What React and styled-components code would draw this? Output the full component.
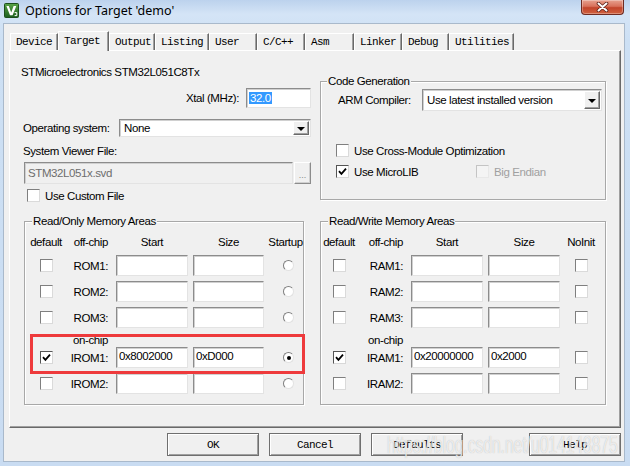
import React from 'react';
import styled, { createGlobalStyle } from 'styled-components';

const UI = `'Liberation Sans', Arial, sans-serif`;
const MONO = `'Liberation Mono', 'DejaVu Sans Mono', monospace`;

const Global = createGlobalStyle`
  html, body { margin: 0; padding: 0; width: 630px; height: 466px; overflow: hidden; background: #c9dcf2; }
  *, *::before, *::after { box-sizing: border-box; }
`;

const Window = styled.div`
  position: relative;
  width: 630px;
  height: 466px;
  display: flex;
  flex-direction: column;
  background: linear-gradient(180deg, #bcd2ed 0px, #d4e4f6 14px, #cde0f4 40px, #c9dcf2 100%);
  font-family: ${UI};
  font-size: 11.5px;
  letter-spacing: -0.4px;
  color: #000;
  overflow: hidden;
`;

const TitleBar = styled.div`
  flex: none;
  height: 23px;
  display: flex;
  align-items: flex-start;
`;

const AppIcon = styled.svg`
  flex: none;
  width: 15px;
  height: 15px;
  margin: 3px 0 0 4px;
`;

const TitleText = styled.div`
  margin: 3px 0 0 6px;
  font-family: 'Noto Sans', 'Open Sans', sans-serif;
  font-size: 12.5px;
  letter-spacing: 0;
  line-height: 16px;
  white-space: nowrap;
`;

const CloseButton = styled.div`
  margin-left: auto;
  margin-right: 6px;
  width: 43px;
  height: 15px;
  border: 1px solid #6e2b22;
  border-top: none;
  border-radius: 0 0 4px 4px;
  background: linear-gradient(180deg, #e7a18f 0%, #d8715b 45%, #c2442b 55%, #d0613f 100%);
  box-shadow: inset 0 0 0 1px rgba(255, 255, 255, 0.3);
  display: flex;
  align-items: center;
  justify-content: center;
`;

const Client = styled.div`
  flex: 1;
  min-height: 0;
  margin: 0 5px 4px 3px;
  background: #f0f0f0;
  border: 1px solid #a9b9cb;
  display: flex;
  flex-direction: column;
`;

const TabStrip = styled.div`
  flex: none;
  height: 26px;
  padding-left: 6px;
  display: flex;
  align-items: flex-end;
`;

const Tab = styled.div`
  flex: none;
  position: relative;
  z-index: ${(p) => (p.$active ? 2 : 0)};
  width: ${(p) => p.$w}px;
  height: ${(p) => (p.$active ? 20 : 17)}px;
  margin-bottom: ${(p) => (p.$active ? -1 : 0)}px;
  padding: 0 0 ${(p) => (p.$active ? 2 : 0)}px 5px;
  display: flex;
  align-items: center;
  background: #f0f0f0;
  border-top: 1px solid #fff;
  border-left: 1px solid #fff;
  border-right: 1px solid #696969;
  box-shadow: inset -1px 0 0 #a0a0a0;
  font-family: ${MONO};
  font-size: 11px;
  letter-spacing: -0.6px;
  white-space: nowrap;
`;

const Panel = styled.div`
  position: relative;
  flex: none;
  margin-left: 5px;
  width: 612px;
  height: 378px;
  border: 1px solid;
  border-color: #fff #696969 #696969 #fff;
  box-shadow: inset -1px -1px 0 #a0a0a0;
  display: flex;
  flex-direction: column;
`;

const TopRow = styled.div`
  display: flex;
  align-items: flex-start;
  padding: 13px 0 0 11px;
`;

const DeviceSection = styled.div`
  width: 290px;
  display: flex;
  flex-direction: column;
`;

const DeviceName = styled.div`
  line-height: 16px;
  height: 16px;
  white-space: nowrap;
`;

const Label = styled.span`
  flex: none;
  white-space: nowrap;
`;

const XtalRow = styled.div`
  margin-top: 8px;
  height: 20px;
  display: flex;
  align-items: center;
  justify-content: flex-end;
  gap: 7px;
`;

const Field = styled.div`
  flex: none;
  width: ${(p) => (p.$w ? `${p.$w}px` : 'auto')};
  height: ${(p) => p.$h || 21}px;
  background: ${(p) => (p.$disabled ? '#f0f0f0' : '#fff')};
  color: ${(p) => (p.$disabled ? '#6d6d6d' : '#000')};
  border: 1px solid;
  border-color: #8c8c8c #e3e3e3 #e3e3e3 #8c8c8c;
  box-shadow: inset 1px 1px 0 #d0d0d0;
  padding: ${(p) => (p.$top ? '2px 2px 0' : '0 3px')};
  display: flex;
  align-items: ${(p) => (p.$top ? 'flex-start' : 'center')};
  line-height: 13px;
  white-space: nowrap;
  overflow: hidden;
`;

const Highlight = styled.span`
  background: #3399ff;
  color: #fff;
  line-height: 12px;
  padding: 0 1px;
  margin-left: -1px;
`;

const OsRow = styled.div`
  margin-top: 11px;
  height: 18px;
  padding-left: 2px;
  display: flex;
  align-items: center;
`;

const SelectBox = styled.div`
  flex: none;
  margin-left: auto;
  margin-right: ${(p) => p.$mr || 0}px;
  width: ${(p) => p.$w}px;
  height: ${(p) => p.$h}px;
  display: flex;
  background: #fff;
  border: 1px solid;
  border-color: #8c8c8c #e3e3e3 #e3e3e3 #8c8c8c;
  box-shadow: inset 1px 1px 0 #d0d0d0;
`;

const SelectValue = styled.span`
  flex: 1;
  padding-left: 4px;
  display: flex;
  align-items: center;
  white-space: nowrap;
`;

const DropButton = styled.span`
  flex: none;
  width: 16px;
  margin: 1px;
  background: #f0f0f0;
  border: 1px solid;
  border-color: #fff #696969 #696969 #fff;
  box-shadow: inset -1px -1px 0 #a0a0a0;
  display: flex;
  align-items: center;
  justify-content: center;
  &::after {
    content: '';
    border-left: 4px solid transparent;
    border-right: 4px solid transparent;
    border-top: 4px solid #000;
    margin-top: 1px;
  }
`;

const SvfLabel = styled.div`
  margin-top: 7px;
  padding-left: 2px;
  line-height: 14px;
`;

const SvfRow = styled.div`
  margin-top: 4px;
  padding-left: 3px;
  display: flex;
  gap: 1px;
`;

const BrowseButton = styled.span`
  flex: none;
  width: 17px;
  height: 22px;
  background: #f0f0f0;
  border: 1px solid;
  border-color: #fff #8c8c8c #8c8c8c #fff;
  box-shadow: inset -1px -1px 0 #d0d0d0;
  color: #8a8a8a;
  font-size: 9px;
  letter-spacing: 0;
  display: flex;
  align-items: flex-end;
  justify-content: center;
  padding-bottom: 3px;
  line-height: 9px;
`;

const CheckRow = styled.div`
  margin-top: ${(p) => p.$mt || 0}px;
  padding-left: ${(p) => p.$pl || 0}px;
  height: 13px;
  display: flex;
  align-items: center;
`;

const CheckItem = styled.span`
  flex: none;
  width: ${(p) => (p.$w ? `${p.$w}px` : 'auto')};
  display: flex;
  align-items: center;
  gap: 5px;
  color: ${(p) => (p.$disabled ? '#a0a0a0' : '#000')};
  white-space: nowrap;
  line-height: 14px;
`;

const Box = styled.span`
  flex: none;
  width: 13px;
  height: 13px;
  display: inline-flex;
  align-items: center;
  justify-content: center;
  background: ${(p) => (p.$disabled ? '#f4f4f4' : '#fff')};
  border: 1px solid;
  border-color: ${(p) =>
    p.$disabled ? '#c4c4c4 #e8e8e8 #e8e8e8 #c4c4c4' : p.$on ? '#555 #d8d8d8 #d8d8d8 #555' : '#7f7f7f #dadada #dadada #7f7f7f'};
`;

const Radio = styled.span`
  width: 11px;
  height: 11px;
  border-radius: 50%;
  border: 1px solid;
  border-color: #7f7f7f #e2e2e2 #e2e2e2 #7f7f7f;
  background: #fff;
  display: flex;
  align-items: center;
  justify-content: center;
  justify-self: end;
  margin-right: 8px;
  &::after {
    content: '';
    width: 4px;
    height: 4px;
    border-radius: 50%;
    background: #000;
    display: ${(p) => (p.$on ? 'block' : 'none')};
  }
`;

const GroupBox = styled.div`
  position: relative;
  flex: none;
  width: ${(p) => p.$w}px;
  height: ${(p) => (p.$h ? `${p.$h}px` : 'auto')};
  margin-top: ${(p) => p.$mt || 0}px;
  margin-left: ${(p) => p.$ml || 0}px;
  border: 1px solid #a8a8a8;
  box-shadow: inset 1px 1px 0 #fff, 1px 1px 0 #fff;
  display: flex;
  flex-direction: column;
  padding-bottom: ${(p) => p.$pb || 0}px;
`;

const Legend = styled.span`
  align-self: flex-start;
  margin: -8px 0 0 ${(p) => p.$ml || 7}px;
  padding: 0 1px;
  background: #f0f0f0;
  line-height: 14px;
  white-space: nowrap;
`;

const CompilerRow = styled.div`
  margin-top: 1px;
  height: 22px;
  padding-left: 17px;
  display: flex;
  align-items: center;
`;

const MemoryRow = styled.div`
  display: flex;
  align-items: flex-start;
  margin-top: 19px;
  padding-left: 14px;
  gap: 16px;
`;

const MemGrid = styled.div`
  margin-top: 5px;
  display: grid;
  grid-template-columns: ${(p) => p.$cols};
  grid-template-rows: 17px 21px 21px 21px 9px 21px 21px;
  column-gap: 5px;
  row-gap: 5px;
  align-items: center;
`;

const HeadCell = styled.span`
  justify-self: ${(p) => p.$align || 'center'};
  padding-right: ${(p) => (p.$align === 'end' ? 3 : 0)}px;
  white-space: nowrap;
  line-height: 14px;
`;

const RowLabel = styled.span`
  justify-self: end;
  padding-right: 3px;
  white-space: nowrap;
  line-height: 14px;
`;

const OnChip = styled.span`
  grid-column: 1 / -1;
  align-self: start;
  text-align: right;
  padding-right: 194px;
  line-height: 14px;
  white-space: nowrap;
`;

const Cell = styled.span`
  justify-self: center;
  display: flex;
`;

const Callout = styled.div`
  position: absolute;
  left: 5px;
  top: 112px;
  width: 275px;
  height: 40px;
  border: 3px solid #ee3a3c;
  pointer-events: none;
`;

const ButtonRow = styled.div`
  flex: none;
  margin-top: 5px;
  padding: 0 3px 0 163px;
  display: flex;
  gap: 10px;
`;

const DlgButton = styled.div`
  flex: none;
  width: 92px;
  height: 23px;
  margin-left: ${(p) => (p.$push ? 'auto' : '0')};
  background: #f0f0f0;
  border: 1px solid #6f6f6f;
  box-shadow: inset 1px 1px 0 #fff, inset -1px -1px 0 #a0a0a0;
  display: flex;
  align-items: center;
  justify-content: center;
  font-family: ${MONO};
  font-size: 11px;
  letter-spacing: -0.6px;
`;

const Watermark = styled.div`
  position: absolute;
  left: 387px;
  top: 433px;
  font-family: 'Liberation Sans', Arial, sans-serif;
  font-size: 24px;
  letter-spacing: 0;
  line-height: 24px;
  white-space: nowrap;
  transform: scaleX(0.65);
  transform-origin: 0 0;
  color: rgba(255, 255, 255, 0.72);
  text-shadow: 0 0 1px rgba(110, 110, 110, 0.45);
  pointer-events: none;
`;

const tabs = [
  { label: 'Device', w: 48 },
  { label: 'Target', w: 51, active: true },
  { label: 'Output', w: 46 },
  { label: 'Listing', w: 54 },
  { label: 'User', w: 48 },
  { label: 'C/C++', w: 48 },
  { label: 'Asm', w: 49 },
  { label: 'Linker', w: 48 },
  { label: 'Debug', w: 47 },
  { label: 'Utilities', w: 65 },
];

function Check({ on, disabled }) {
  return (
    <Box $on={on} $disabled={disabled}>
      {on && (
        <svg width="9" height="9" viewBox="0 0 9 9">
          <path d="M1 4.2 L3.4 6.8 L8 1.6" fill="none" stroke="#000" strokeWidth="1.8" />
        </svg>
      )}
    </Box>
  );
}

function Memory({ title, prefix, lastHead, cols, width, radio, start, size, callout }) {
  const offRows = [1, 2, 3];
  const Last = ({ on }) => (radio ? <Radio $on={on} /> : <Cell><Check /></Cell>);
  return (
    <GroupBox $w={width} $pb={10}>
      <Legend>{title}</Legend>
      <MemGrid $cols={cols}>
        <HeadCell>default</HeadCell>
        <HeadCell $align="end">off-chip</HeadCell>
        <HeadCell>Start</HeadCell>
        <HeadCell>Size</HeadCell>
        <HeadCell>{lastHead}</HeadCell>
        {offRows.map((n) => (
          <React.Fragment key={n}>
            <Cell><Check /></Cell>
            <RowLabel>{`${prefix}${n}:`}</RowLabel>
            <Field />
            <Field />
            <Last />
          </React.Fragment>
        ))}
        <OnChip>on-chip</OnChip>
        <Cell><Check on /></Cell>
        <RowLabel>{`I${prefix}1:`}</RowLabel>
        <Field $top>{start}</Field>
        <Field $top>{size}</Field>
        <Last on />
        <Cell><Check /></Cell>
        <RowLabel>{`I${prefix}2:`}</RowLabel>
        <Field />
        <Field />
        <Last />
      </MemGrid>
      {callout && <Callout />}
    </GroupBox>
  );
}

export default function App() {
  return (
    <>
      <Global />
      <Window>
        <TitleBar>
          <AppIcon viewBox="0 0 15 15">
            <defs>
              <linearGradient id="kg" x1="0" y1="0" x2="0" y2="1">
                <stop offset="0" stopColor="#5aa346" />
                <stop offset="1" stopColor="#1c5f1f" />
              </linearGradient>
            </defs>
            <rect x="0.5" y="0.5" width="14" height="14" rx="1" fill="url(#kg)" stroke="#1c4f1c" />
            <path d="M2.4 3 L4.8 3 L7.2 9.6 L9.6 3 L12.3 3 L8.6 12.2 L6 12.2 Z" fill="#fff" />
            <path d="M10.6 9.6 L12.8 9.6 L12.8 12.6 L10.6 12.6" fill="none" stroke="#fff" strokeWidth="1" />
          </AppIcon>
          <TitleText>Options for Target 'demo'</TitleText>
          <CloseButton>
            <svg width="13" height="10" viewBox="0 0 13 10">
              <path d="M2.5 1.5 L10.5 8.5 M10.5 1.5 L2.5 8.5" stroke="#5a1f17" strokeWidth="3.6" strokeLinecap="round" />
              <path d="M2.5 1.5 L10.5 8.5 M10.5 1.5 L2.5 8.5" stroke="#fff" strokeWidth="2" strokeLinecap="round" />
            </svg>
          </CloseButton>
        </TitleBar>
        <Client>
          <TabStrip>
            {tabs.map((t) => (
              <Tab key={t.label} $w={t.w} $active={t.active}>
                {t.label}
              </Tab>
            ))}
          </TabStrip>
          <Panel>
            <TopRow>
              <DeviceSection>
                <DeviceName>STMicroelectronics STM32L051C8Tx</DeviceName>
                <XtalRow>
                  <Label>Xtal (MHz):</Label>
                  <Field $w={65} $h={20}>
                    <Highlight>32.0</Highlight>
                  </Field>
                </XtalRow>
                <OsRow>
                  <Label>Operating system:</Label>
                  <SelectBox $w={192} $h={18}>
                    <SelectValue>None</SelectValue>
                    <DropButton />
                  </SelectBox>
                </OsRow>
                <SvfLabel>System Viewer File:</SvfLabel>
                <SvfRow>
                  <Field $w={269} $h={22} $disabled>
                    STM32L051x.svd
                  </Field>
                  <BrowseButton>...</BrowseButton>
                </SvfRow>
                <CheckRow $mt={5} $pl={6}>
                  <CheckItem>
                    <Check />
                    Use Custom File
                  </CheckItem>
                </CheckRow>
              </DeviceSection>
              <GroupBox $w={286} $h={119} $mt={17} $ml={9}>
                <Legend $ml={6}>Code Generation</Legend>
                <CompilerRow>
                  <Label>ARM Compiler:</Label>
                  <SelectBox $w={180} $h={22} $mr={3}>
                    <SelectValue>Use latest installed version</SelectValue>
                    <DropButton />
                  </SelectBox>
                </CompilerRow>
                <CheckRow $mt={33} $pl={15}>
                  <CheckItem>
                    <Check />
                    Use Cross-Module Optimization
                  </CheckItem>
                </CheckRow>
                <CheckRow $mt={8} $pl={15}>
                  <CheckItem $w={140}>
                    <Check on />
                    Use MicroLIB
                  </CheckItem>
                  <CheckItem $disabled>
                    <Check disabled />
                    Big Endian
                  </CheckItem>
                </CheckRow>
              </GroupBox>
            </TopRow>
            <MemoryRow>
              <Memory
                title="Read/Only Memory Areas"
                prefix="ROM"
                lastHead="Startup"
                cols="42px 39px 72px 71px 33px"
                width={280}
                radio
                start="0x8002000"
                size="0xD000"
                callout
              />
              <Memory
                title="Read/Write Memory Areas"
                prefix="RAM"
                lastHead="NoInit"
                cols="36px 44px 72px 72px 32px"
                width={286}
                start="0x20000000"
                size="0x2000"
              />
            </MemoryRow>
          </Panel>
          <ButtonRow>
            <DlgButton>OK</DlgButton>
            <DlgButton>Cancel</DlgButton>
            <DlgButton>Defaults</DlgButton>
            <DlgButton $push>Help</DlgButton>
          </ButtonRow>
        </Client>
        <Watermark>https://blog.csdn.net/u014148875</Watermark>
      </Window>
    </>
  );
}
